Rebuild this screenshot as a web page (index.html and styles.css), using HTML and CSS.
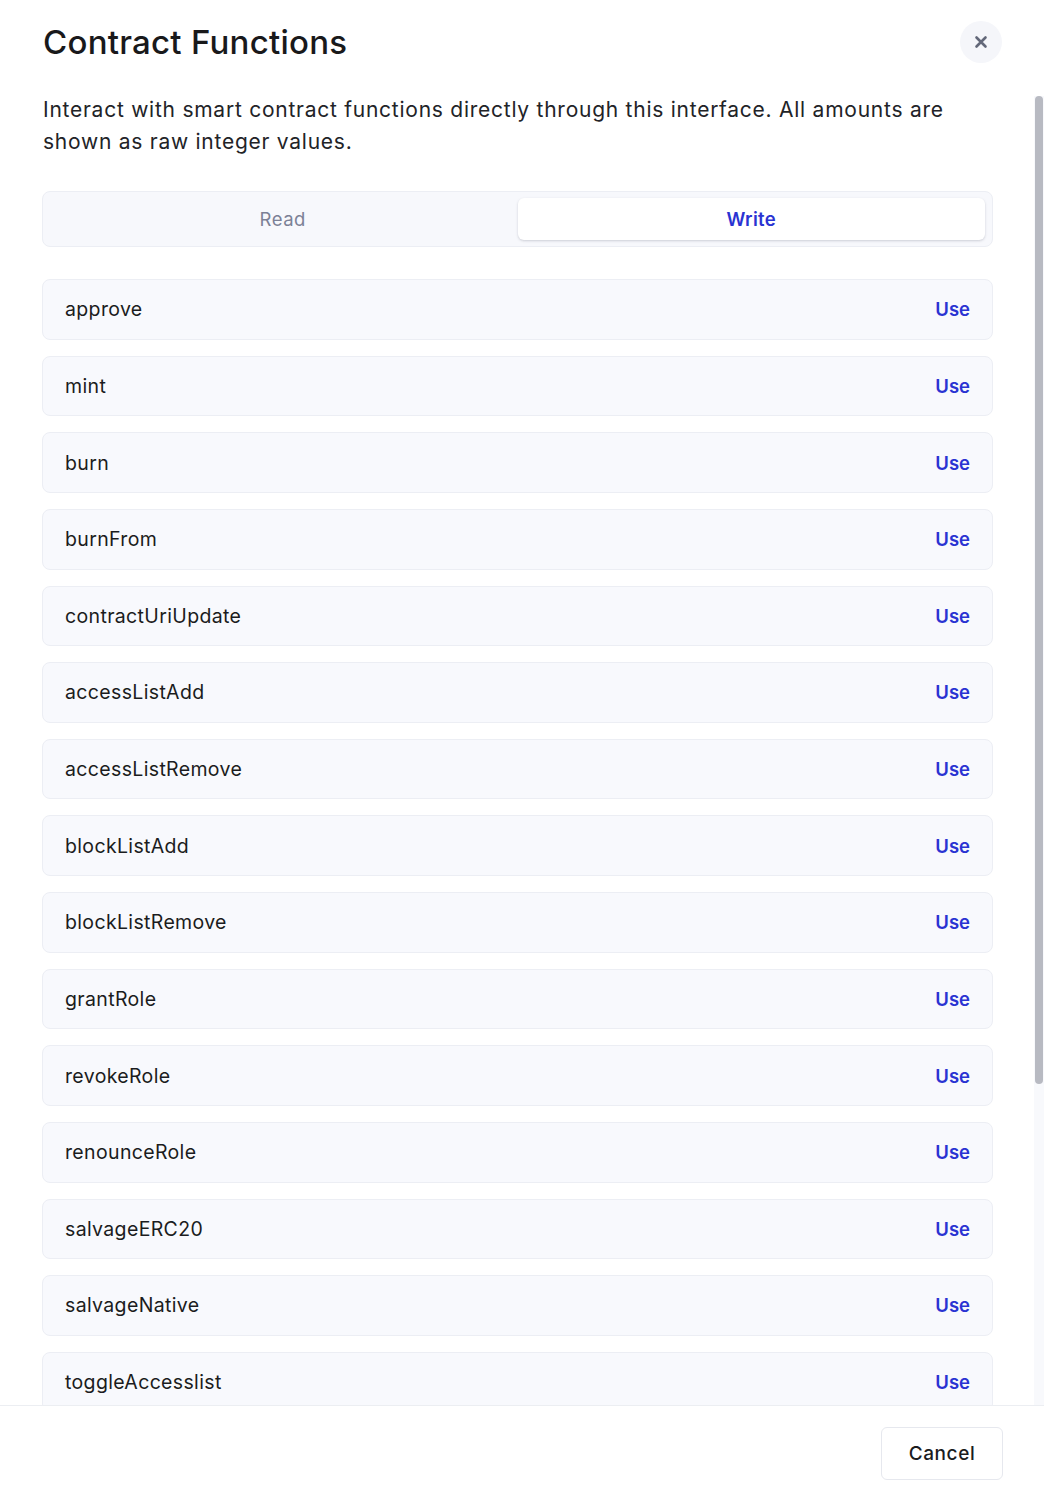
FILE: index.html
```html
<!DOCTYPE html>
<html lang="en">
<head>
<meta charset="utf-8">
<title>Contract Functions</title>
<link rel="stylesheet" href="styles.css">
</head>
<body>
<div class="modal">
  <header class="header">
    <h1 class="title">Contract Functions</h1>
    <button class="close" aria-label="Close">
      <svg width="14" height="14" viewBox="0 0 14 14"><path d="M2.5 2.5L11.5 11.5M11.5 2.5L2.5 11.5" stroke="#636879" stroke-width="2.6" stroke-linecap="round" fill="none"/></svg>
    </button>
  </header>
  <main class="body">
    <p class="desc">Interact with smart contract functions directly through this interface. All amounts are shown as raw integer values.</p>
    <div class="tabs">
      <div class="tab">Read</div>
      <div class="tab active">Write</div>
    </div>
    <ul class="list">
      <li class="row"><span class="name">approve</span><span class="use">Use</span></li>
      <li class="row"><span class="name">mint</span><span class="use">Use</span></li>
      <li class="row"><span class="name">burn</span><span class="use">Use</span></li>
      <li class="row"><span class="name">burnFrom</span><span class="use">Use</span></li>
      <li class="row"><span class="name">contractUriUpdate</span><span class="use">Use</span></li>
      <li class="row"><span class="name">accessListAdd</span><span class="use">Use</span></li>
      <li class="row"><span class="name">accessListRemove</span><span class="use">Use</span></li>
      <li class="row"><span class="name">blockListAdd</span><span class="use">Use</span></li>
      <li class="row"><span class="name">blockListRemove</span><span class="use">Use</span></li>
      <li class="row"><span class="name">grantRole</span><span class="use">Use</span></li>
      <li class="row"><span class="name">revokeRole</span><span class="use">Use</span></li>
      <li class="row"><span class="name">renounceRole</span><span class="use">Use</span></li>
      <li class="row"><span class="name">salvageERC20</span><span class="use">Use</span></li>
      <li class="row"><span class="name">salvageNative</span><span class="use">Use</span></li>
      <li class="row"><span class="name">toggleAccesslist</span><span class="use">Use</span></li>
    </ul>
    <div class="scrollbar"><div class="thumb"></div></div>
  </main>
  <footer class="footer">
    <button class="cancel">Cancel</button>
  </footer>
</div>
</body>
</html>
```

FILE: styles.css
```css
* { box-sizing: border-box; }
html, body { margin: 0; padding: 0; background: #ffffff; }
body { font-family: Inter, "Open Sans", "Liberation Sans", sans-serif; color: #1e1f23; }

.modal {
  width: 1044px;
  height: 1496px;
  display: flex;
  flex-direction: column;
  background: #fff;
  overflow: hidden;
}

.header {
  height: 88px;
  flex: none;
  display: flex;
  justify-content: space-between;
  align-items: flex-start;
  padding: 21px 42px 0 43px;
}
.title {
  margin: 0;
  font-size: 33px;
  line-height: 42px;
  font-weight: 500;
  color: #19191b;
  letter-spacing: 0.25px;
}
.close {
  width: 42px;
  height: 42px;
  border-radius: 50%;
  border: none;
  background: #f5f6fa;
  display: flex;
  align-items: center;
  justify-content: center;
  padding: 0;
}

.body {
  position: relative;
  flex: 1;
  overflow: hidden;
  padding: 6px 51px 0 42px;
}
.desc {
  margin: 0 0 33px 1px;
  font-size: 21px;
  line-height: 32px;
  letter-spacing: 0.75px;
  color: #222327;
  padding-right: 20px;
}

.tabs {
  display: flex;
  height: 56px;
  padding: 6px 7px 6px 6px;
  background: #f7f8fc;
  border: 1px solid #eceef4;
  border-radius: 8px;
  gap: 1px;
}
.tab {
  flex: 1;
  display: flex;
  align-items: center;
  justify-content: center;
  font-size: 18.5px;
  letter-spacing: 0.5px;
  color: #7c8196;
  border-radius: 6px;
}
.tab.active {
  background: #fff;
  color: #2a33d2;
  font-weight: 600;
  letter-spacing: 0.3px;
  box-shadow: 0 1px 3px rgba(30, 35, 60, 0.14), 0 1px 2px rgba(30, 35, 60, 0.06);
}

.list {
  list-style: none;
  margin: 32px 0 0 0;
  padding: 0;
  display: flex;
  flex-direction: column;
  gap: 16px;
}
.row {
  height: 60.64px;
  display: flex;
  align-items: center;
  justify-content: space-between;
  padding: 0 22px;
  background: #f8f9fd;
  border: 1px solid #eceef4;
  border-radius: 8px;
}
.name {
  font-size: 19.5px;
  letter-spacing: 0.35px;
  color: #1b1c20;
}
.use {
  font-size: 18.5px;
  font-weight: 600;
  color: #2a33d2;
}

.scrollbar {
  position: absolute;
  top: 8px;
  right: 0;
  bottom: 0;
  width: 10px;
  background: #f8f9fc;
  padding-left: 1px;
}
.thumb {
  width: 8px;
  height: 988px;
  background: #b8bac2;
  border-radius: 4px;
}

.footer {
  flex: none;
  height: 91px;
  border-top: 1px solid #eceef2;
  display: flex;
  justify-content: flex-end;
  align-items: flex-start;
  padding: 21px 41px 0 0;
  background: #fff;
}
.cancel {
  width: 122px;
  height: 53px;
  background: #fff;
  border: 1px solid #e6e8ee;
  border-radius: 6px;
  font-family: Inter, "Open Sans", "Liberation Sans", sans-serif;
  font-size: 19px;
  letter-spacing: 0.6px;
  font-weight: 500;
  color: #1b1b1e;
}
```
